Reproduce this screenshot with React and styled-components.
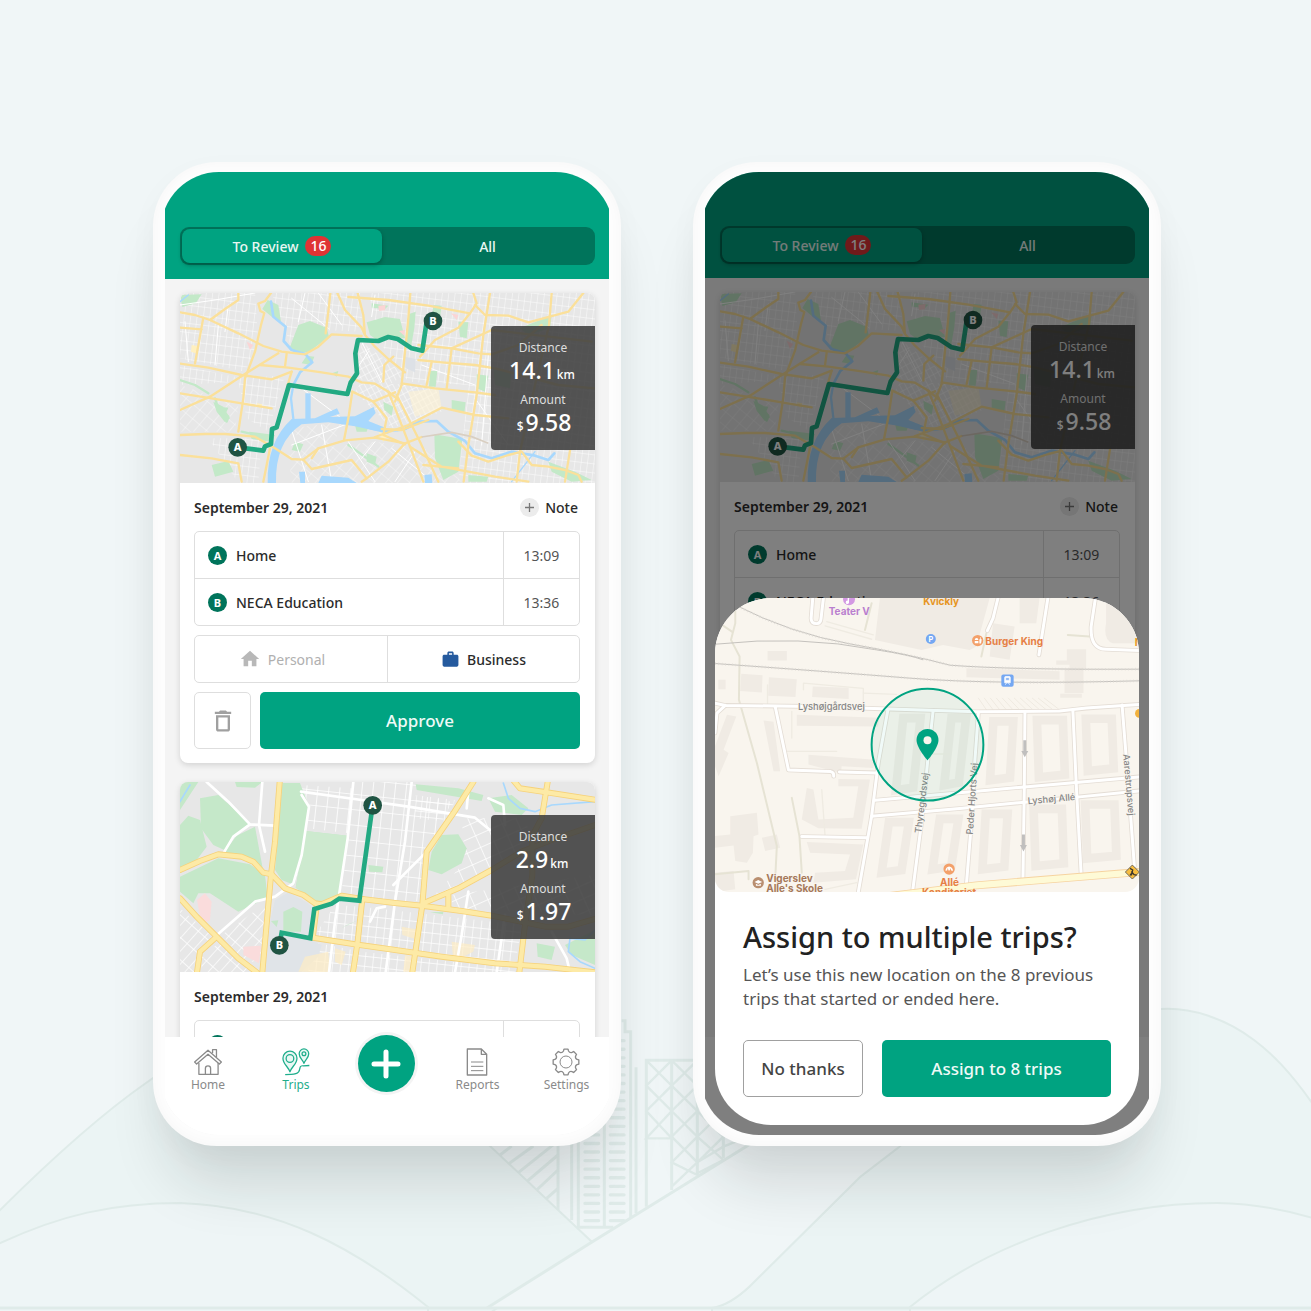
import React, { useId, useState } from "react";
import styled, { createGlobalStyle } from "styled-components";
import { MdHome, MdWork, MdDeleteOutline } from "react-icons/md";

const color = {
  page: "#f0f6f7",
  green: "#00a381",
  greenDeep: "#00745b",
  red: "#df3434",
  ink: "#2b2b2b",
  muted: "#8a8a8a",
  line: "#dedede",
  blue: "#255a9e",
};

const GlobalStyle = createGlobalStyle`
  *, *::before, *::after { box-sizing: border-box; }
  body {
    margin: 0;
    background: ${color.page};
    color: ${color.ink};
    font-family: "Noto Sans", "Open Sans", sans-serif;
  }
  button { font: inherit; color: inherit; cursor: pointer; margin: 0; }
`;

/* ---------- Page ---------- */

const Page = styled.main`
  position: relative;
  min-height: 100vh;
  display: flex;
  flex-wrap: wrap;
  justify-content: center;
  align-items: flex-start;
  gap: 72px;
  padding: 162px 150px 165px 153px;
  overflow: hidden;
  isolation: isolate;
`;

const Backdrop = styled.svg`
  position: absolute;
  inset: auto 0 0 0;
  width: 100%;
  height: auto;
  z-index: -1;
`;

/* ---------- Phone ---------- */

const PhoneFrame = styled.section`
  width: 468px;
  height: 984px;
  padding: 10px 12px 11px;
  border-radius: 64px;
  background: #fdfdfd;
  box-shadow: inset 0 0 14px rgba(0, 0, 0, 0.03), 0 52px 60px -16px rgba(20, 30, 30, 0.14),
    0 10px 30px rgba(20, 30, 30, 0.03);
`;

const ScreenClip = styled.div`
  height: 100%;
  overflow: hidden;
`;

const Screen = styled.div`
  position: relative;
  height: 100%;
  margin: 0 -4px;
  padding: 0 4px;
  border-radius: 58px;
  overflow: hidden;
`;

const AppView = styled.div`
  height: 100%;
  display: flex;
  flex-direction: column;
  background: #f4f4f4;
`;

const Header = styled.header`
  padding: ${(p) => (p.$compact ? 54 : 55)}px 14px 14px 15px;
  background: ${color.green};
`;

const Tabs = styled.div`
  display: grid;
  grid-template-columns: 200px 1fr;
  height: 38px;
  padding: 2px;
  border-radius: 9px;
  background: ${color.greenDeep};
`;

const Tab = styled.button`
  display: flex;
  align-items: center;
  justify-content: center;
  gap: 7px;
  padding: 0;
  border: 0;
  border-radius: 8px;
  font-size: 14px;
  font-weight: 500;
  color: #e9f7f3;
  background: ${(p) => (p.$active ? color.green : "transparent")};
  box-shadow: ${(p) => (p.$active ? "0 2px 4px rgba(0, 40, 30, 0.4)" : "none")};
`;

const Count = styled.span`
  height: 20px;
  padding: 0 5px;
  border-radius: 10px;
  line-height: 20px;
  background: ${color.red};
  color: #fff;
`;

const Feed = styled.div`
  flex: 1;
  min-height: 0;
  display: flex;
  flex-direction: column;
  gap: 19px;
  padding: 14px 14px 0 15px;
  overflow: hidden;
`;

/* ---------- Trip card ---------- */

const Card = styled.article`
  flex: none;
  border-radius: 8px;
  background: #fff;
  box-shadow: 0 2px 6px rgba(0, 0, 0, 0.14);
`;

const MapBox = styled.div`
  position: relative;
  height: 190px;
  border-radius: 8px 8px 0 0;
  overflow: hidden;
`;

const MapSvg = styled.svg`
  display: block;
  width: 100%;
  height: 100%;
`;

const Stats = styled.dl`
  position: absolute;
  top: 33px;
  right: 0;
  width: 104px;
  height: 124px;
  margin: 0;
  padding: 14px 0 0;
  border-radius: 4px 0 0 4px;
  background: rgba(62, 62, 62, 0.88);
  color: #fff;
  text-align: center;
`;

const StatLabel = styled.dt`
  font-size: 12px;
  line-height: 16px;
  color: #dedede;
`;

const StatValue = styled.dd`
  margin: 0 0 8px;
  font-size: 23px;
  font-weight: 500;
  line-height: 28px;
`;

const Unit = styled.small`
  margin: 0 2px;
  font-size: 12px;
  font-weight: 500;
  line-height: 1;
`;

const CardBody = styled.div`
  display: grid;
  gap: 9px;
  padding: 0 15px 14px 14px;
`;

const DateRow = styled.div`
  display: flex;
  align-items: center;
  justify-content: space-between;
  height: 39px;
  padding: 9px 2px 0 0;
  font-size: 14px;
`;

const DateText = styled.time`
  font-weight: 600;
`;

const NoteButton = styled.button`
  display: flex;
  align-items: center;
  gap: 6px;
  padding: 0;
  border: 0;
  background: none;
  font-size: 14px;
  font-weight: 500;
`;

const NotePlus = styled.svg`
  width: 19px;
  height: 19px;
`;

const Stops = styled.table`
  width: 100%;
  table-layout: fixed;
  border-collapse: separate;
  border-spacing: 0;
  border: 1px solid ${color.line};
  border-radius: 5px;
  font-size: 14px;
`;

const StopRow = styled.tr`
  & + & > * {
    height: 47px;
    border-top: 1px solid ${color.line};
  }
`;

const StopPlace = styled.th`
  height: 46px;
  padding: 0 0 0 13px;
  font-weight: 500;
  text-align: left;
`;

const StopTime = styled.td`
  width: 76px;
  padding: 0;
  border-left: 1px solid ${color.line};
  text-align: center;
  color: #555;
`;

const PlaceLabel = styled.span`
  display: flex;
  align-items: center;
  gap: 9px;
`;

const Badge = styled.span`
  width: 19px;
  height: 19px;
  border-radius: 50%;
  background: ${color.greenDeep};
  color: #fff;
  font-size: 11px;
  font-weight: 700;
  line-height: 19px;
  text-align: center;
`;

const Choice = styled.fieldset`
  display: grid;
  grid-template-columns: 1fr 1fr;
  height: 48px;
  min-width: 0;
  margin: 0;
  padding: 0;
  border: 1px solid ${color.line};
  border-radius: 5px;
`;

const ChoiceOption = styled.label`
  display: flex;
  align-items: center;
  justify-content: center;
  gap: 7px;
  font-size: 14px;
  font-weight: ${(p) => (p.$active ? 500 : 400)};
  color: ${(p) => (p.$active ? color.ink : "#b0b0b0")};
  cursor: pointer;

  &:first-of-type {
    padding-right: 18px;
  }
  & + & {
    border-left: 1px solid ${color.line};
  }
  svg {
    color: ${(p) => (p.$active ? color.blue : "#b8b8b8")};
  }
`;

const HiddenRadio = styled.input`
  position: absolute;
  width: 1px;
  height: 1px;
  margin: 0;
  opacity: 0;
`;

const Actions = styled.div`
  display: grid;
  grid-template-columns: ${(p) => p.$columns};
  gap: ${(p) => p.$gap}px;
`;

const Button = styled.button`
  display: flex;
  align-items: center;
  justify-content: center;
  height: 57px;
  padding: 0;
  border: ${(p) => (p.$primary ? "0" : p.$quiet ? `1px solid ${color.line}` : "1px solid #a0a0a0")};
  border-radius: 5px;
  background: ${(p) => (p.$primary ? color.green : "#fff")};
  color: ${(p) => (p.$primary ? "#effaf7" : p.$quiet ? "#a0a0a0" : "#444")};
  font-size: 17px;
  font-weight: 500;
`;

/* ---------- Bottom navigation ---------- */

const Nav = styled.nav`
  flex: none;
  display: grid;
  grid-template-columns: 86fr 90fr 90fr 93fr 85fr;
  justify-items: center;
  align-items: start;
  height: 98px;
  background: #fff;
`;

const NavLink = styled.a`
  display: flex;
  flex-direction: column;
  align-items: center;
  padding-top: 11px;
  font-size: 12px;
  line-height: 17px;
  text-decoration: none;
  color: ${(p) => (p.$active ? "#1fae8c" : color.muted)};
`;

const NavIcon = styled.svg`
  width: 28px;
  height: 28px;
  fill: none;
  stroke: currentColor;
  stroke-width: 4;
  stroke-linejoin: round;
`;

const AddButton = styled.button`
  display: grid;
  place-items: center;
  width: 57px;
  height: 57px;
  margin-top: -2px;
  padding: 0;
  border: 0;
  border-radius: 50%;
  background: ${color.green};
  box-shadow: 0 0 0 3px #f4f4f4;
`;

/* ---------- Assign sheet ---------- */

const Scrim = styled.div`
  position: absolute;
  inset: 0;
  display: flex;
  flex-direction: column;
  justify-content: flex-end;
  padding: 0 14px 10px;
  background: rgba(0, 0, 0, 0.5);
`;

const Sheet = styled.section`
  border-radius: 56px;
  background: #fff;
  overflow: hidden;
`;

const SheetMap = styled.div`
  height: 294px;
  border-radius: 0 0 14px 14px;
  overflow: hidden;
`;

const SheetBody = styled.div`
  padding: 25px 28px 28px;
`;

const SheetTitle = styled.h2`
  margin: 0;
  font-size: 29px;
  font-weight: 500;
  line-height: 40px;
  color: #222;
`;

const SheetText = styled.p`
  margin: 6px 0 29px;
  font-size: 17px;
  line-height: 24px;
  color: #555;
`;

/* ---------- Map drawing helpers ---------- */

function Lines({ paths, ...rest }) {
  return (
    <g fill="none" strokeLinejoin="round" strokeLinecap="round" {...rest}>
      {paths.map((d) => (
        <path key={d} d={d} />
      ))}
    </g>
  );
}

function Shapes({ paths, ...rest }) {
  return (
    <g {...rest}>
      {paths.map((d) => (
        <path key={d} d={d} />
      ))}
    </g>
  );
}

function StreetGrid({ id, w, h, angle, stroke = 2, tone = "#fff" }) {
  return (
    <pattern id={id} width={w} height={h} patternUnits="userSpaceOnUse" patternTransform={`rotate(${angle})`}>
      <path d={`M0 0H${w}M0 0V${h}`} stroke={tone} strokeWidth={stroke * 2} />
    </pattern>
  );
}

function RoutePin({ x, y, letter }) {
  return (
    <g>
      <circle cx={x} cy={y} r="28" fill="#205443" />
      <text x={x} y={y + 12} textAnchor="middle" fontSize="33" fontWeight="800" fill="#fff">
        {letter}
      </text>
    </g>
  );
}

const cityRoads = [
  "M15 82L60 90L105 105L150 72L190 45V24",
  "M15 128L80 133M85 98L72 170L60 235",
  "M105 105L190 145L265 183L320 200L390 208L430 185L470 148L560 153",
  "M15 236L100 248L200 270L290 283L350 260",
  "M15 375L105 335L205 270L310 205",
  "M255 240L340 248L440 262L520 275L560 292L600 296L640 320L670 345",
  "M288 24L270 48L250 56L256 78L268 84L258 120L240 200L210 280L205 340L190 440",
  "M15 325L110 340L200 355L290 370",
  "M15 450L90 447L150 447L240 455L300 490L350 522L385 524L430 490L510 466L600 458L690 475L740 456",
  "M15 510L110 520L190 535L200 590M285 490L265 590M350 260L338 300",
  "M466 24L460 80L452 145",
  "M487 24L510 75L560 128L570 150M548 24L565 90L570 150L600 185L640 222L690 262",
  "M520 36L640 45L760 62L885 85L850 128L780 165L735 215",
  "M895 24L905 55L885 85M900 60L930 90L1000 92L1060 112L1180 80L1225 24",
  "M706 24L700 100L690 200L680 300L660 350",
  "M730 180L830 190L910 205L950 208L1030 180L1100 120",
  "M730 225L800 232L900 240L960 250L1150 300L1260 310",
  "M945 24L925 150L905 330L880 480L866 590",
  "M830 190L815 310M770 230L755 300M830 190L950 135L1250 170",
  "M680 295L780 310L900 322L960 330",
  "M1130 24L1122 120L1080 300L1035 500L1025 590",
  "M625 290L628 240L655 215M335 205L330 245",
  "M532 320L520 400L507 465",
  "M532 320L595 350L635 400L625 450L690 478",
  "M595 350L660 322M640 320L680 420L705 485L745 590M665 330L705 410L735 470L790 590",
  "M600 456L700 420L800 368L900 390L1000 400",
  "M620 432L680 435L760 405M690 475L640 530L575 580L560 590",
  "M385 524L410 552L530 525L575 580M410 520L430 490",
  "M705 485L800 545L960 575L1060 590M745 540L850 550",
  "M850 470L890 512L940 530L1000 510L1040 500L1070 540L1120 545L1170 555L1210 570L1220 590",
  "M1185 496L1170 590",
];

const cityParks = [
  "M345 185L370 120L405 108L455 128L462 155L400 202L360 203Z",
  "M575 112L630 96L675 102L690 160L640 155L610 168L585 150Z",
  "M700 88L722 80L718 130L708 186L694 176Z",
  "M775 60L800 62L796 92L772 90ZM590 55L640 62L630 72L590 68Z",
  "M278 45L310 60L318 110L290 95L262 72ZM15 30L80 28L62 55L22 66Z",
  "M765 258H787L782 305H762ZM778 448L862 462L850 560L805 585L780 520Z",
  "M830 345L872 352L868 385L830 375ZM110 540L160 528L175 560L120 575Z",
  "M850 110L880 112L875 160L855 155ZM905 268L940 272L930 320L905 310Z",
  "M360 470L385 478L375 500L350 495ZM575 505L605 515L600 540L575 530Z",
  "M1120 530L1200 560L1250 585L1190 590L1130 560ZM880 570L940 575L935 590H880Z",
  "M115 350L145 365L165 400L150 412L125 380ZM135 365L160 368L155 380L135 378Z",
  "M470 265L490 258L485 275ZM1035 130L1130 90L1125 130L1060 150ZM540 420L580 425L575 440H545Z",
  "M222 440L300 450L290 470L230 462ZM395 212L418 215L408 240L380 235ZM625 350L655 365L650 392L628 375Z",
  "M955 252L1010 260L1005 310L960 300Z",
];

function CityMap() {
  const id = useId().replace(/[^a-zA-Z0-9]/g, "");
  return (
    <MapSvg viewBox="15 24 1245 570" preserveAspectRatio="xMidYMid slice" role="img" aria-label="Route from A to B, 14.1 km">
      <defs>
        <StreetGrid id={`${id}a`} w={19} h={27} angle={7} stroke={1.3} />
        <StreetGrid id={`${id}b`} w={15} h={21} angle={-28} stroke={1.4} />
        <StreetGrid id={`${id}c`} w={27} h={34} angle={40} stroke={1.2} />
      </defs>
      <rect width="1275" height="620" fill="#e7e7e7" />
      <path d="M15 24H240L250 170L210 260L15 220ZM290 24H560V140L440 135L350 190ZM15 240L200 280L330 270L280 440L215 400L190 290L15 300ZM580 24H1260V594H850L880 300L700 290L620 180ZM100 460H260L250 594H190Z" fill={`url(#${id}a)`} />
      <path d="M555 295L780 300L800 380L650 430L540 320ZM560 170L690 270L640 300L540 280Z" fill={`url(#${id}b)`} />
      <path d="M340 500L600 470L800 500L860 594H350ZM15 300L190 360L180 440L15 440ZM350 430L500 410L480 470L400 500Z" fill={`url(#${id}c)`} opacity="0.8" />
      <path d="M700 320L790 310L800 370L720 395Z" fill="#fff3d4" opacity="0.6" />
      <Shapes paths={cityParks} fill="#c3e9c8" />
      <path d="M690 215L722 222L720 262L692 250Z" fill="#dde1e6" />
      <path d="M610 62L632 60L630 76L612 78ZM215 170L235 180L225 195ZM672 138L690 135L688 152ZM828 85L850 90L845 105Z" fill="#fbd5d5" />
      <path d="M50 180L72 184L66 206L48 200ZM245 355L262 358L256 372ZM610 440L640 450L625 470Z" fill="#fff0c0" />
      <Lines
        stroke="#c3e9c8"
        strokeWidth="7"
        paths={["M120 340L130 370L160 395L155 410", "M15 285L60 300L100 325", "M200 440L285 460", "M520 480L590 530L610 545"]}
      />
      <Lines
        stroke="#fff"
        strokeWidth="3"
        paths={[
          "M15 60L120 45L240 24M30 110L40 230M130 120L120 240M160 60L150 140",
          "M350 40L460 130M390 24L370 110M430 24L500 120M600 30L590 95",
          "M345 420L400 590M440 420L470 590M350 480L560 400M520 470L600 590M600 470L560 520",
          "M380 310L500 400M560 170L620 290M580 200L540 260M740 240L900 300",
          "M650 490L760 580M720 500L660 590M900 340L1000 480M940 210L920 480",
        ]}
      />
      <g fill="none" stroke="#a8d8fd" strokeLinecap="round" strokeLinejoin="round">
        <path d="M288 50L295 95L332 125L326 168L350 195L392 208L412 232L375 262L355 300" strokeWidth="8" />
        <path d="M355 300L348 340L356 410" strokeWidth="7" />
        <path d="M296 590Q288 470 362 415Q470 390 560 420Q620 445 690 432L730 410L785 408L820 440L870 468L900 505L950 520L1010 500L1080 512L1120 525L1138 505" strokeWidth="8" />
        <path d="M15 50L40 30M1010 590L1080 500" strokeWidth="4" />
      </g>
      <Shapes
        fill="#a8d8fd"
        paths={[
          "M278 594Q275 470 350 402L420 400L486 370L494 386L465 396L540 394L596 366L602 384L580 408L640 432L640 446L540 424L460 412L380 418Q300 470 303 594Z",
          "M391 325H407V408H391Z",
          "M430 594L440 572L520 578L545 594ZM372 560H390V594H376ZM748 570L770 568L772 594H750Z",
        ]}
      />
      <Lines paths={cityRoads} stroke="#fbe09a" strokeWidth="7" />
      <path d="M740 456L830 442L890 455L940 475" fill="none" stroke="#d9cfc2" strokeWidth="5" />
      <path
        d="M188 487L265 497L270 484L288 477L291 432L305 427L342 300L517 327L527 293L546 265L541 205L549 165L610 168L640 156L668 162L710 190L742 197L755 110"
        fill="none"
        stroke="#22a982"
        strokeWidth="14"
        strokeLinejoin="round"
      />
      <RoutePin x={188} y={487} letter="A" />
      <RoutePin x={774} y={108} letter="B" />
    </MapSvg>
  );
}

const suburbRoads = [
  "M314 21L300 200L288 300L262 592",
  "M15 285L75 258L130 238L200 245L235 260L265 293L290 298L330 340L385 360L420 385L440 388L500 362L560 372L660 384L740 392L860 408L950 422L1110 455L1180 455L1260 432",
  "M15 370L65 425L125 485L190 550L245 592M125 485L75 530L66 592",
  "M895 21L835 115L755 230L742 390L712 592",
  "M1010 10L1035 40L1115 52L1260 74M1118 21L1100 130L1070 185",
  "M745 385L850 340L950 285L1040 230L1130 195L1260 150M820 355V395M1072 195V300L1050 450L1033 592",
  "M562 372L548 500L534 592",
  "M425 395L413 488L540 508L640 522L800 545L960 565L1110 575L1260 592",
];

const suburbParks = [
  "M75 70L130 60L225 145L180 180L148 225L115 210L78 160Z",
  "M15 150L40 122L75 135L95 215L60 262L15 280Z",
  "M150 228L185 182L240 155L265 290L225 258L150 235Z",
  "M15 305L130 250L225 268L270 300L278 368L190 410L105 355L70 355L55 385L15 350Z",
  "M322 24H375L402 95L385 230L358 330L320 315L300 285Z",
  "M392 168L518 182L495 362L430 380L362 338Z",
  "M800 180L850 178L875 220L860 265L800 298L760 285L770 230Z",
  "M325 410L355 396L382 410L378 470L325 470Z",
  "M722 28L850 40L925 60L920 78L725 45ZM940 70L1010 60L1060 100L1040 120L960 110Z",
  "M1170 510L1260 465V570L1190 540ZM1085 505L1140 515L1130 555L1088 545Z",
  "M580 270L625 275L622 292L582 290ZM180 21H262L240 38L185 36ZM15 21H70L15 105Z",
  "M498 460L550 435L520 448ZM765 412L805 410L804 418ZM288 438L310 436L305 456Z",
];

function SuburbMap() {
  const id = useId().replace(/[^a-zA-Z0-9]/g, "");
  return (
    <MapSvg viewBox="15 21 1245 570" preserveAspectRatio="xMidYMid slice" role="img" aria-label="Route from A to B, 2.9 km">
      <defs>
        <StreetGrid id={`${id}a`} w={33} h={46} angle={6} stroke={2.4} />
        <StreetGrid id={`${id}b`} w={24} h={30} angle={6} stroke={2} />
        <StreetGrid id={`${id}c`} w={44} h={38} angle={-24} stroke={2.2} />
        <StreetGrid id={`${id}d`} w={26} h={50} angle={42} stroke={2} />
      </defs>
      <rect width="1275" height="620" fill="#e7e7e7" />
      <path d="M378 30L535 40L520 175L395 160ZM535 21H725L700 380L560 370L500 350L520 180ZM725 60L830 80L760 230L745 380L690 375Z" fill={`url(#${id}a)`} />
      <path d="M560 395L1040 450L1020 575L420 480L480 390ZM720 60L840 75L815 140L720 130ZM560 530L1020 580V594H400L410 500Z" fill={`url(#${id}b)`} />
      <path d="M860 130L1060 130L1050 225L770 370L870 260ZM830 360L1260 300V420L830 400Z" fill={`url(#${id}c)`} />
      <path d="M140 480L285 375L270 560L210 560ZM15 400L120 490L60 594H15ZM80 560L130 500L230 594H80Z" fill={`url(#${id}d)`} />
      <path d="M300 375L340 352L400 385L412 400L400 490L440 510L430 545L380 590H270L285 440Z" fill="#e0e4e8" />
      <Shapes paths={suburbParks} fill="#c5e8c9" />
      <path d="M392 168L518 182L495 362L430 380L362 338Z" fill="#cdeacf" />
      <path d="M66 375L90 355L110 380L105 435L80 450ZM205 515L258 512L252 565L205 540Z" fill="#fadcdc" />
      <path d="M390 545L460 530L465 592L370 590ZM480 520L512 530L500 570L480 560ZM680 455L735 465L730 495L682 480ZM830 500L900 510L895 530L835 560ZM690 540L720 545L715 590H685Z" fill="#fdecc4" opacity="0.7" />
      <Lines
        stroke="#a8d8fd"
        strokeWidth="5"
        paths={["M985 24L1000 70L1035 100L1080 110L1130 90L1260 80", "M1260 465L1230 495L1185 490L1180 530L1215 560L1260 580", "M15 80L45 30"]}
      />
      <Lines
        stroke="#fff"
        strokeWidth="8"
        paths={[
          "M378 50L560 75L700 95L900 128L945 165",
          "M710 21L690 200L660 380L632 592",
          "M95 21L160 80L225 148L300 152M225 148L175 185L145 235",
          "M380 60L402 95L380 240L355 325L300 365L240 380L120 485",
          "M940 70L985 90L990 150M880 50L875 100",
          "M535 21L518 190L480 440L462 592",
          "M880 350L860 480L840 592M990 420L965 592M1130 470L1175 550L1185 592",
          "M655 330L750 235M585 440L605 400L630 395",
          "M262 21L252 150L270 230",
        ]}
      />
      <Lines paths={suburbRoads} stroke="#f6d27a" strokeWidth="18" />
      <Lines paths={suburbRoads} stroke="#fdeaa6" strokeWidth="13" />
      <path
        d="M593 90L553 377L493 371L470 386L418 402L406 490L320 473L313 511"
        fill="none"
        stroke="#22a982"
        strokeWidth="14"
      />
      <RoutePin x={593} y={91} letter="A" />
      <RoutePin x={313} y={511} letter="B" />
    </MapSvg>
  );
}

const localRoads = [
  "M14 340L45 347L300 350L540 358L800 366L1050 364L1130 355L1289 344",
  "M14 430L20 370L45 347",
  "M195 350L235 541L362 546Q372 548 371 560M388 547L500 550",
  "M534 360L505 520L485 680L445 908",
  "M670 362L655 500L635 700L608 908",
  "M806 368L795 520L785 700L770 885",
  "M946 370L944 600L940 870",
  "M1090 360L1100 580L1115 855",
  "M1238 346L1255 560L1275 830",
  "M495 632L700 614L945 592L1289 562",
  "M485 680L750 657L945 638L1110 622L1289 604",
  "M275 741L472 745",
  "M308 24L303 85Q303 102 320 101Q332 100 333 85L340 24",
  "M865 24L850 85L833 122M1015 24L988 195",
  "M1158 24L1145 110Q1142 178 1190 178L1289 182",
];

const localBlocks = [
  "M510 24H840L800 170L780 180L700 165L635 180L495 150Z",
  "M850 100L915 110L900 210L840 200ZM930 24H990L980 100H930ZM1190 40H1289V160H1210Q1180 150 1190 100Z",
  "M172 183H230V212H172ZM93 252L157 256L155 308L90 304ZM176 262L260 268L256 322L174 318ZM308 290L416 294V328L306 322ZM24 270H46V298H24Z",
  "M770 235L1050 244V270L770 262ZM1072 178H1130V235H1122V310H1065V240H1080V225H1040V212H1072ZM1052 312H1117V324H1052Z",
  "M260 375L508 384L504 410L260 408ZM160 392L190 396L210 545L190 545ZM50 375L78 380L40 480L55 490L25 560L14 530V470Z",
  "M295 495L495 510L490 535L395 530L393 550L295 525Z",
  "M60 680L140 670L145 735L130 740L128 790L110 820L75 815L70 768L14 775V740L60 735ZM155 745L200 735L210 775L165 785ZM14 850L70 845L75 900L14 908Z",
  "M290 595L310 600L325 690L430 685L445 590L385 590V568L480 570L455 718L325 716L275 690Z",
  "M290 758L460 765L438 870L310 880L315 850L405 845L420 795L300 790Z",
];

const courtyards = [
  [545, 372, 100, 240],
  [690, 372, 92, 225],
  [828, 382, 96, 200],
  [975, 378, 98, 195],
  [1122, 374, 98, 180],
  [502, 685, 108, 175],
  [655, 675, 104, 175],
  [805, 660, 102, 190],
  [965, 645, 105, 195],
  [1120, 632, 108, 185],
];

function LocalMap() {
  return (
    <MapSvg viewBox="14 24 1275 884" preserveAspectRatio="xMidYMid slice" role="img" aria-label="Map of the new location">
      <rect width="1310" height="930" fill="#f9f5ee" />
      <Shapes paths={localBlocks} fill="#f0ebe4" />
      <g fill="none" stroke="#f0ebe4" strokeWidth="26">
        {courtyards.map(([x, y, w, h]) => {
          const lean = x < 700 ? 22 : x < 950 ? 10 : -6;
          return <path key={`${x}-${y}`} d={`M${x + lean + 13} ${y + 13}H${x + w - 13}L${x + w - lean - 13} ${y + h - 18}L${x + 13} ${y + h - 10}Z`} />;
        })}
      </g>
      <Lines
        paths={["M75 24V100L62 150L88 200L86 330L140 520L200 770L196 850", "M14 90L65 125M245 625L268 740L275 850M14 855L115 845V870", "M485 40L465 120M830 130L815 200M1075 135L1140 140"]}
        stroke="#e6e3d4"
        strokeWidth="6"
      />
      <Lines
        paths={["M172 285V345M280 300V280L460 296V345M245 365V445M225 485H380M335 600L345 740M345 900L440 880", "M350 95L490 135M345 108L485 148M460 310L560 314", "M655 493H718"]}
        stroke="#efebe2"
        strokeWidth="4"
      />
      <Lines
        paths={Array.from({ length: 12 }, (_, i) => `M${806 + i * 18} 325L${830 + i * 20} 360`)}
        stroke="#efeae1"
        strokeWidth="3"
      />
      <g fill="none" stroke="#c4c1bd" strokeWidth="3">
        <path d="M75 45Q240 130 420 162T720 226Q900 240 1289 238" />
        <path d="M14 163Q270 135 500 180Q600 195 640 210" />
        <path d="M14 221Q350 245 600 265T1289 273" />
      </g>
      <g fill="none" stroke="#dedad4" strokeWidth="8" strokeDasharray="2 8">
        <path d="M75 45Q240 130 420 162T720 226Q900 240 1289 238" />
        <path d="M14 221Q350 245 600 265T1289 273" />
      </g>
      <Lines paths={localRoads} stroke="#e4ddd5" strokeWidth="14" />
      <Lines paths={localRoads} stroke="#fff" strokeWidth="9" />
      <path d="M540 920L800 888L1289 848" fill="none" stroke="#f6d3a0" strokeWidth="24" />
      <path d="M540 920L800 888L1289 848" fill="none" stroke="#fefad6" strokeWidth="19" />
      <g fill="#c0bfbe">
        <path d="M941 452H950V484H956L945.500 503L935 484H941ZM937 735H946V767H952L941.500 786L931 767H937Z" />
      </g>

      <g fontFamily="Inter, sans-serif" fontSize="28" fill="#858585" fontWeight="500" stroke="#f9f5ee" strokeWidth="4" paintOrder="stroke">
        <text x="264" y="360">Lyshøjgårdsvej</text>
        <text x="955" y="644" transform="rotate(-5 955 644)">Lyshøj Allé</text>
        <text x="634" y="732" transform="rotate(-83 634 732)">Thyregodsvej</text>
        <text x="789" y="736" transform="rotate(-86 789 736)">Peder Hjorts Vej</text>
        <text x="1241" y="494" transform="rotate(85 1241 494)">Aarestrupsvej</text>
      </g>
      <g fontFamily="Inter, sans-serif" fontSize="30" fontWeight="700">
        <g fill="#b97fcf">
          <text x="356" y="75">Teater V</text>
          <circle cx="417" cy="28" r="18" fill="#d398e3" />
          <path d="M413 36V20L423 18V24L417 25V36A5 5 0 1 1 413 32" fill="#fff" />
        </g>
        <text x="640" y="45" fill="#e6951f">Kvickly</text>
        <text x="1276" y="168" fill="#e6951f">N</text>
        <g fill="#e67f45">
          <text x="827" y="164">Burger King</text>
          <circle cx="804" cy="152" r="17" fill="#f3a06a" />
          <path d="M795 150Q795 144 801 144Q806 144 806 150ZM795 153H806V160H795ZM809 148H816L814 161H809ZM811 142H813V148H811Z" fill="#fff" />
          <text x="719" y="889" textAnchor="middle">Allé</text>
          <text x="718" y="921" textAnchor="middle">Konditoriet</text>
          <circle cx="718" cy="839" r="17" fill="#f3a06a" />
          <path d="M707 844Q708 832 718 831Q728 832 730 844L724 843L722 836L720 843H716L714 836L712 843Z" fill="#fff" />
        </g>
        <g fill="#a5785a">
          <text x="168" y="878">Vigerslev</text>
          <text x="168" y="907">Alle's Skole</text>
          <circle cx="144" cy="880" r="17" fill="#b98e6f" />
          <path d="M133 878L144 872L156 878L144 883ZM137 883L144 887L152 883V889H137Z" fill="#fff" />
        </g>
      </g>
      <circle cx="663" cy="147" r="15" fill="#74a7f2" />
      <text x="663" y="155" textAnchor="middle" fontFamily="Inter, sans-serif" fontSize="22" fontWeight="700" fill="#fff">
        P
      </text>
      <rect x="875" y="254" width="37" height="37" rx="6" fill="#74a7f2" />
      <path d="M885 263Q885 260 888 260H899Q902 260 902 263V279H885ZM888 264V271H899V264ZM887 285L891 279M900 285L896 279" fill="#fff" fillRule="evenodd" stroke="#fff" strokeWidth="2" />
      <circle cx="1290" cy="371" r="13" fill="#f2b13c" />
      <path d="M1269 827L1290 848L1269 869L1248 848Z" fill="#f7bd3e" stroke="#6d675e" strokeWidth="3" />
      <path d="M1262 837L1270 842L1266 858M1266 846L1274 856L1282 857M1262 858L1268 850" fill="none" stroke="#3c362c" strokeWidth="4" />

      <circle cx="653" cy="465" r="168" fill={color.green} fillOpacity="0.06" stroke={color.green} strokeWidth="6" />
      <path d="M653 418C634 418 620 433 620 451C620 475 653 512 653 512S686 475 686 451C686 433 672 418 653 418Z" fill={color.green} />
      <circle cx="653" cy="452" r="12" fill="#f9f5ee" />
    </MapSvg>
  );
}

/* ---------- Backdrop ---------- */

function Skyline() {
  const windows = Array.from({ length: 22 }, (_, i) => 182 + i * 25.7);
  return (
    <g transform="translate(440 980) scale(0.33333)" fill="none" stroke="#dfebe9" strokeWidth="9">
      <path d="M395 150V720M415 150V742H520M493 180V742M545 122H555V155H572V715M588 262V700" />
      <g strokeWidth="10" strokeLinecap="round">
        {windows.map((y) => (
          <path key={y} d={`M435 ${y}H476M511 ${y}H552`} />
        ))}
      </g>
      <path d="M354 480V690M180 525L215 498M205 552L280 498M235 578L345 490M260 605L354 525M290 630L354 570M320 655L354 625" />
      <path d="M619 680V241H900M695 241V630M772 241V585M850 241V535" />
      <path
        strokeWidth="7"
        d="M619 241L695 317L619 393L695 475M695 241L619 317L695 393L619 475H695M695 241L772 317L695 393L772 470L695 547L772 585M772 241L695 317L772 393L695 470L772 547L695 620M772 393L850 470L772 547L850 500L900 480M850 393L772 470L850 540L772 580"
      />
    </g>
  );
}

function Landscape() {
  return (
    <Backdrop viewBox="0 811 1311 500" aria-hidden="true">
      <Skyline />
      <g stroke="#dfebe9" strokeWidth="2" fill="#ebf4f4">
        <path d="M-8 1218C50 1160 100 1115 146 1083C260 1000 360 1030 490 1146L592 1242L480 1320H-8Z" />
        <path d="M1319 1113C1290 1070 1270 1052 1254 1040C1225 1018 1190 1007 1161 1009C1060 1015 970 1080 899 1147L860 1177L750 1286Q730 1305 712 1308V1320H1319Z" />
        <path d="M487 1308L592 1242L747 1146L860 1060L899 1147L860 1177L750 1286Q730 1305 712 1308Z" fill="#f0f6f7" stroke="none" />
        <path d="M487 1308L592 1242L747 1146L800 1110" fill="none" strokeWidth="3" />
        <path d="M712 1308Q730 1305 750 1286L860 1177L899 1147" fill="none" />
        <path d="M-8 1247C60 1214 115 1203 180 1203C275 1206 350 1244 428 1307V1320H-8Z" fill="#eef5f6" />
        <path d="M910 1307C985 1246 1100 1203 1217 1203Q1270 1204 1319 1220V1320H910Z" fill="#eef5f6" />
      </g>
      <path d="M0 1308H1311" stroke="#dfebe9" strokeWidth="3" />
    </Backdrop>
  );
}

/* ---------- Icons ---------- */

const HomeIcon = () => (
  <NavIcon viewBox="0 0 86 84" aria-hidden="true">
    <path d="M2 42L43 6L84 42L78 48L43 18L8 48Z" />
    <path d="M15 45V80H74V45M57 15V4H69V27M35 80V62Q35 54 43 54Q51 54 51 62V80" />
  </NavIcon>
);

const TripsIcon = () => (
  <NavIcon viewBox="0 0 88 86" aria-hidden="true">
    <path d="M25 74C19 56 3 50 3 31A22 22 0 0 1 47 31C47 50 31 56 25 74Z" fill="#eaf8f4" />
    <circle cx="25" cy="32" r="12" />
    <path d="M69 47C65 35 54 30 54 17A15 15 0 0 1 84 17C84 30 73 35 69 47Z" fill="#eaf8f4" />
    <circle cx="69" cy="17" r="6" />
    <path d="M10 83C28 79 43 86 52 74C60 62 52 53 67 55L86 54" />
  </NavIcon>
);

const ReportsIcon = () => (
  <NavIcon viewBox="0 0 64 84" aria-hidden="true">
    <path d="M3 3H45L61 19V81H3ZM45 3V19H61" />
    <path d="M14 42H51M14 55H51M14 68H51" strokeWidth="3" />
  </NavIcon>
);

const gearPath = (() => {
  const at = (r, deg) => {
    const a = (deg * Math.PI) / 180;
    return `${(42 + r * Math.cos(a)).toFixed(1)} ${(42 + r * Math.sin(a)).toFixed(1)}`;
  };
  let d = `M${at(39, -99)}`;
  for (let i = 0; i < 8; i += 1) {
    const a = -90 + i * 45;
    d += `L${at(39, a + 9)}L${at(34, a + 13)}Q${at(29, a + 22.5)} ${at(34, a + 32)}L${at(39, a + 36)}`;
  }
  return `${d}Z`;
})();

const SettingsIcon = () => (
  <NavIcon viewBox="0 0 84 84" aria-hidden="true">
    <path d={gearPath} />
    <circle cx="42" cy="42" r="18" strokeWidth="3" />
  </NavIcon>
);

/* ---------- App pieces ---------- */

const trips = [
  {
    id: 1,
    Map: CityMap,
    distance: "14.1",
    amount: "9.58",
    note: true,
    stops: [
      ["A", "Home", "13:09"],
      ["B", "NECA Education", "13:36"],
    ],
  },
  {
    id: 2,
    Map: SuburbMap,
    distance: "2.9",
    amount: "1.97",
    note: false,
    stops: [["A", "Home", "09:12"]],
  },
];

function TripActions() {
  const [kind, setKind] = useState("business");
  const group = useId();
  const option = (value, label, icon) => (
    <ChoiceOption $active={kind === value}>
      <HiddenRadio type="radio" name={group} checked={kind === value} onChange={() => setKind(value)} />
      {icon}
      {label}
    </ChoiceOption>
  );
  return (
    <>
      <Choice aria-label="Trip type">
        {option("personal", "Personal", <MdHome size={22} aria-hidden="true" />)}
        {option("business", "Business", <MdWork size={19} aria-hidden="true" />)}
      </Choice>
      <Actions $columns="57px 1fr" $gap={9}>
        <Button type="button" $quiet aria-label="Delete trip">
          <MdDeleteOutline size={28} />
        </Button>
        <Button type="button" $primary>
          Approve
        </Button>
      </Actions>
    </>
  );
}

function Trip({ trip, editable }) {
  const { Map, distance, amount, note, stops } = trip;
  return (
    <Card>
      <MapBox>
        <Map />
        <Stats>
          <StatLabel>Distance</StatLabel>
          <StatValue>
            {distance}
            <Unit>km</Unit>
          </StatValue>
          <StatLabel>Amount</StatLabel>
          <StatValue>
            <Unit>$</Unit>
            {amount}
          </StatValue>
        </Stats>
      </MapBox>
      <CardBody>
        <DateRow>
          <DateText dateTime="2021-09-29">September 29, 2021</DateText>
          {note && (
            <NoteButton type="button">
              <NotePlus viewBox="0 0 19 19" aria-hidden="true">
                <circle cx="9.500" cy="9.500" r="9.500" fill="#ececec" />
                <path d="M9.500 5V14M5 9.500H14" stroke="#777" strokeWidth="1.300" />
              </NotePlus>
              Note
            </NoteButton>
          )}
        </DateRow>
        <Stops>
          <tbody>
            {stops.map(([letter, place, time]) => (
              <StopRow key={letter}>
                <StopPlace scope="row">
                  <PlaceLabel>
                    <Badge>{letter}</Badge>
                    {place}
                  </PlaceLabel>
                </StopPlace>
                <StopTime>{time}</StopTime>
              </StopRow>
            ))}
          </tbody>
        </Stops>
        {editable && <TripActions />}
      </CardBody>
    </Card>
  );
}

function NavItems() {
  return (
    <>
      <NavLink href="#home">
        <HomeIcon />
        Home
      </NavLink>
      <NavLink href="#trips" $active aria-current="page">
        <TripsIcon />
        Trips
      </NavLink>
      <AddButton type="button" aria-label="Add trip">
        <svg width="30" height="30" viewBox="0 0 30 30" aria-hidden="true">
          <path d="M15 3V27M3 15H27" stroke="#fff" strokeWidth="5" strokeLinecap="round" />
        </svg>
      </AddButton>
      <NavLink href="#reports">
        <ReportsIcon />
        Reports
      </NavLink>
      <NavLink href="#settings">
        <SettingsIcon />
        Settings
      </NavLink>
    </>
  );
}

/* With a sheet open, the parts it hides entirely are left out. */
function TripsApp({ sheetOpen = false }) {
  const shown = sheetOpen ? trips.slice(0, 1) : trips;
  return (
    <AppView inert={sheetOpen}>
      <Header $compact={sheetOpen}>
        <Tabs role="tablist">
          <Tab type="button" role="tab" aria-selected="true" $active>
            To Review <Count>16</Count>
          </Tab>
          <Tab type="button" role="tab" aria-selected="false">
            All
          </Tab>
        </Tabs>
      </Header>
      <Feed>
        {shown.map((trip) => (
          <Trip key={trip.id} trip={trip} editable={!sheetOpen && trip.note} />
        ))}
      </Feed>
      <Nav aria-label="Main">{!sheetOpen && <NavItems />}</Nav>
    </AppView>
  );
}

function Phone({ label, children }) {
  return (
    <PhoneFrame aria-label={label}>
      <ScreenClip>
        <Screen>{children}</Screen>
      </ScreenClip>
    </PhoneFrame>
  );
}

function AssignSheet() {
  const title = useId();
  return (
    <Scrim>
      <Sheet role="dialog" aria-labelledby={title}>
        <SheetMap>
          <LocalMap />
        </SheetMap>
        <SheetBody>
          <SheetTitle id={title}>Assign to multiple trips?</SheetTitle>
          <SheetText>Let’s use this new location on the 8 previous trips that started or ended here.</SheetText>
          <Actions $columns="120px 1fr" $gap={19}>
            <Button type="button">No thanks</Button>
            <Button type="button" $primary>
              Assign to 8 trips
            </Button>
          </Actions>
        </SheetBody>
      </Sheet>
    </Scrim>
  );
}

export default function App() {
  return (
    <>
      <GlobalStyle />
      <Page>
        <Landscape />
        <Phone label="Trips to review">
          <TripsApp />
        </Phone>
        <Phone label="Assign location">
          <TripsApp sheetOpen />
          <AssignSheet />
        </Phone>
      </Page>
    </>
  );
}
